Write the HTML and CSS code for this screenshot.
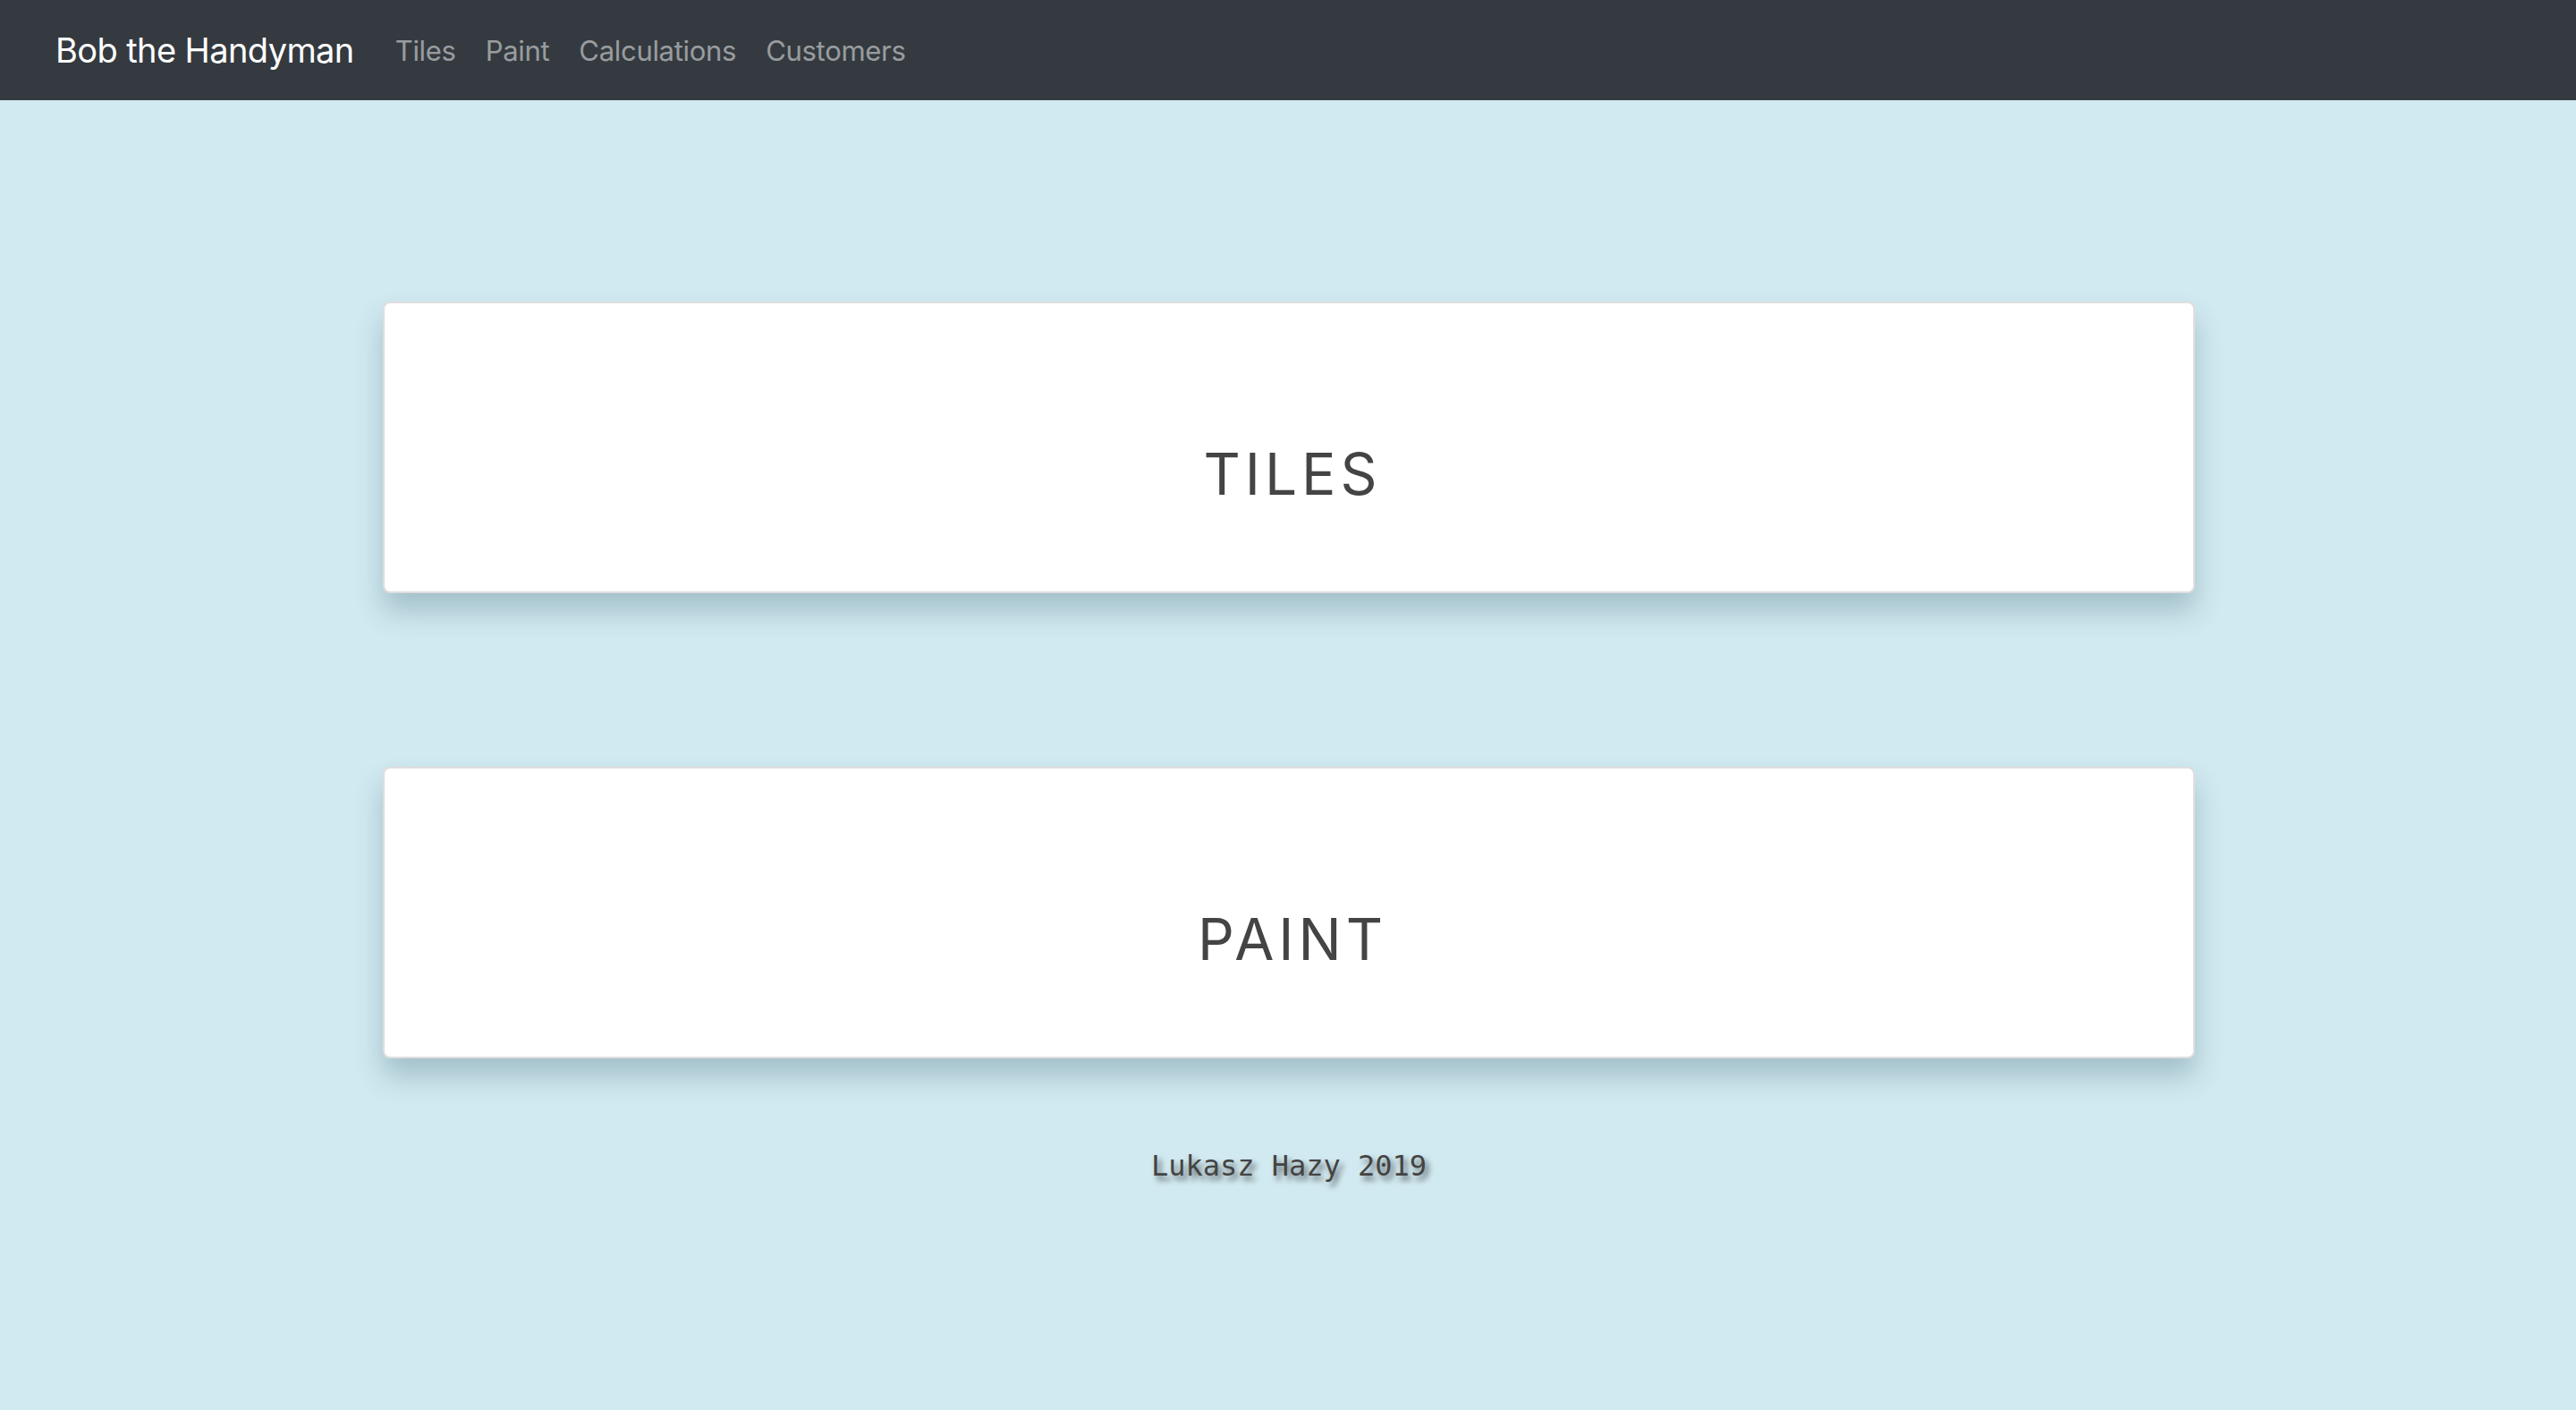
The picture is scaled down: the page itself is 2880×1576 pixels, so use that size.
FILE: index.html
```html
<!DOCTYPE html>
<html lang="en">
<head>
<meta charset="utf-8">
<title>Bob the Handyman</title>
<link rel="stylesheet" href="styles.css">
</head>
<body>
<nav class="navbar">
  <a class="brand" href="#">Bob the Handyman</a>
  <ul class="nav-links">
    <li><a href="#">Tiles</a></li>
    <li><a href="#">Paint</a></li>
    <li><a href="#">Calculations</a></li>
    <li><a href="#">Customers</a></li>
  </ul>
</nav>
<main class="content">
  <a class="card" href="#"><span class="card-title">TILES</span></a>
  <a class="card" href="#"><span class="card-title">PAINT</span></a>
  <footer class="footer">Lukasz Hazy 2019</footer>
</main>
</body>
</html>
```
FILE: styles.css
```css
* { box-sizing: border-box; }
html, body { margin: 0; padding: 0; }
body {
  background: #d1e9f0;
  font-family: "Inter", "Liberation Sans", Arial, sans-serif;
  min-height: 1576px;
}
.navbar {
  height: 112px;
  background: #343a40;
  display: flex;
  align-items: center;
  padding: 0 62px;
}
.brand {
  color: #fff;
  font-size: 38px;
  text-decoration: none;
  margin-right: 46px;
  letter-spacing: -0.6px;
}
.nav-links {
  list-style: none;
  margin: 0;
  padding: 0;
  display: flex;
  gap: 33px;
}
.nav-links a {
  color: rgba(255,255,255,0.5);
  font-size: 31px;
  text-decoration: none;
  letter-spacing: -0.3px;
}
.content {
  display: flex;
  flex-direction: column;
  align-items: center;
  padding-top: 225px;
  padding-left: 2px;
}
.card {
  width: 2026px;
  height: 326px;
  background: #fff;
  border: 2px solid #dedede;
  border-radius: 8px;
  box-shadow: 0 20px 30px rgba(60, 100, 115, 0.3);
  display: flex;
  justify-content: center;
  align-items: flex-start;
  padding-top: 159px;
  padding-left: 8px;
  text-decoration: none;
  margin-bottom: 194px;
}
.card + .card { margin-bottom: 0; }
.card-title {
  font-size: 64px;
  letter-spacing: 5px;
  color: #444;
  line-height: 1;
}
.footer {
  margin-top: 101px;
  font-family: "DejaVu Sans Mono", "Liberation Mono", monospace;
  font-size: 32px;
  color: #444;
  text-shadow: 4px 5px 6px rgba(0,0,0,0.55);
}
```
